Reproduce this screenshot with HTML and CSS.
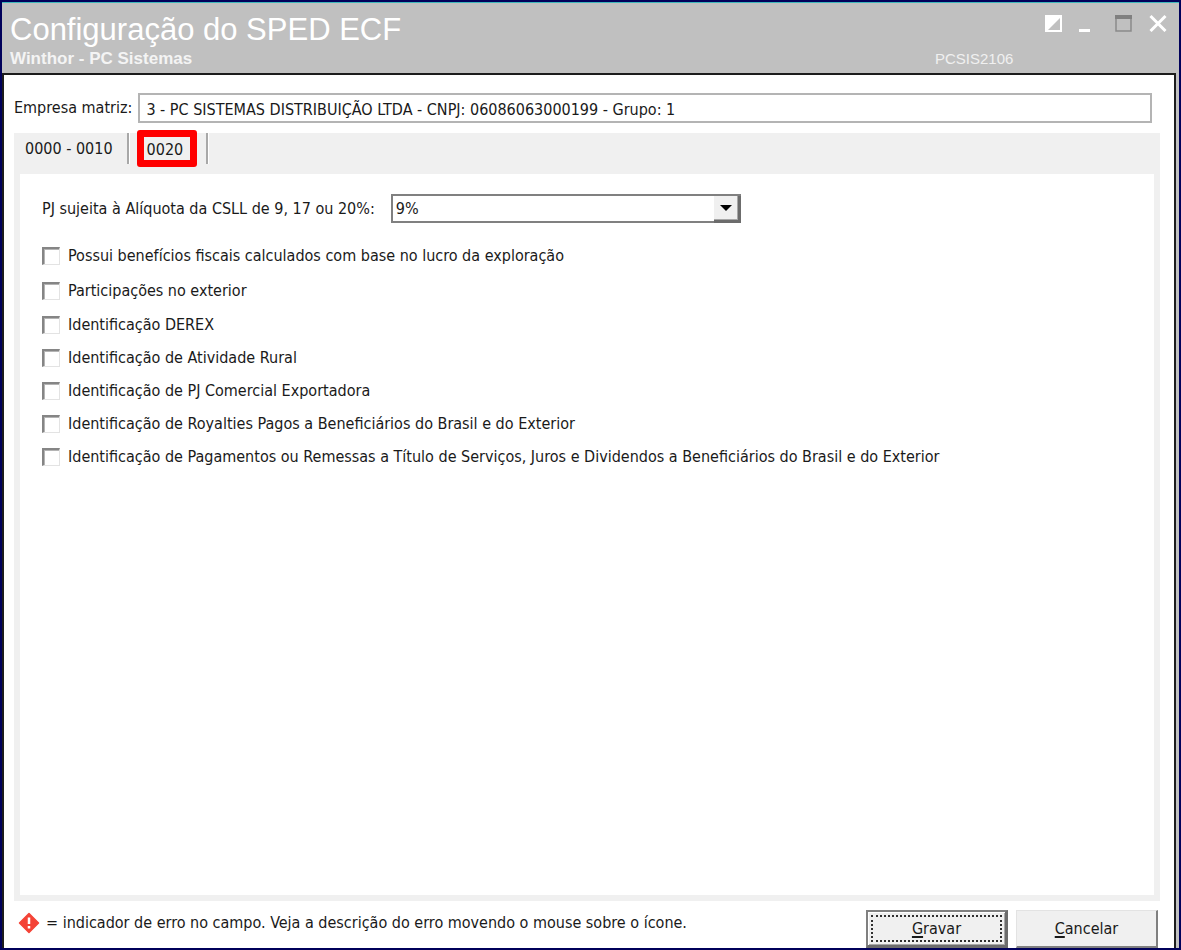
FILE: index.html
```html
<!DOCTYPE html>
<html lang="pt-BR">
<head>
<meta charset="utf-8">
<title>Configuração do SPED ECF</title>
<link rel="stylesheet" href="styles.css">
</head>
<body>
<div class="window">
  <header class="titlebar">
    <div class="heading">
      <h1 class="title">Configuração do SPED ECF</h1>
      <p class="subtitle">Winthor - PC Sistemas</p>
    </div>
    <div class="titlebar-side">
      <div class="controls">
        <button class="control" type="button" aria-label="Alternar modo">
          <svg width="18" height="18" viewBox="0 0 18 18"><rect x="1" y="1" width="17" height="17" fill="#fff"/><path d="M16 4v12H4z" fill="#c0c0c0"/></svg>
        </button>
        <button class="control" type="button" aria-label="Minimizar">
          <svg width="18" height="18" viewBox="0 0 18 18"><rect x="1" y="15" width="11" height="3" fill="#fff"/></svg>
        </button>
        <button class="control control-max" type="button" aria-label="Maximizar" disabled>
          <svg width="18" height="18" viewBox="0 0 18 18"><rect x="1" y="2" width="15" height="15" fill="none" stroke="#8a8a8a" stroke-width="1.500"/><rect x="0" y="1" width="17" height="4" fill="#808080"/></svg>
        </button>
        <button class="control" type="button" aria-label="Fechar">
          <svg width="18" height="18" viewBox="0 0 18 18"><path d="M1.500 2l15 15M16.500 2l-15 15" stroke="#fff" stroke-width="3"/></svg>
        </button>
      </div>
      <p class="routine">PCSIS2106</p>
    </div>
  </header>

  <main class="client">
    <div class="company">
      <label for="company">Empresa matriz:</label>
      <input id="company" class="text-box" type="text" value="3 - PC SISTEMAS DISTRIBUIÇÃO LTDA - CNPJ: 06086063000199 - Grupo: 1" readonly>
    </div>

    <section class="tabs">
      <div class="tab-list" role="tablist">
        <button class="tab" type="button" role="tab" aria-selected="false">0000 - 0010</button>
        <button class="tab tab-active" type="button" role="tab" aria-selected="true">0020</button>
      </div>
      <form class="panel" id="settings">
        <div class="rate">
          <label for="rate">PJ sujeita à Alíquota da CSLL de 9, 17 ou 20%:</label>
          <div class="select-box">
            <select id="rate" class="select"><option>9%</option><option>17%</option><option>20%</option></select>
            <span class="select-arrow"><svg width="12" height="6" viewBox="0 0 12 6"><path d="M0 0h12L6 6z"/></svg></span>
          </div>
        </div>
        <div class="checks">
          <label class="check"><input type="checkbox">Possui benefícios fiscais calculados com base no lucro da exploração</label>
          <label class="check"><input type="checkbox">Participações no exterior</label>
          <label class="check"><input type="checkbox">Identificação DEREX</label>
          <label class="check"><input type="checkbox">Identificação de Atividade Rural</label>
          <label class="check"><input type="checkbox">Identificação de PJ Comercial Exportadora</label>
          <label class="check"><input type="checkbox">Identificação de Royalties Pagos a Beneficiários do Brasil e do Exterior</label>
          <label class="check"><input type="checkbox">Identificação de Pagamentos ou Remessas a Título de Serviços, Juros e Dividendos a Beneficiários do Brasil e do Exterior</label>
        </div>
      </form>
    </section>

    <footer class="footer">
      <p class="hint">
        <svg width="22" height="22" viewBox="0 0 22 22"><path d="M11 1.500L20.500 11 11 20.500 1.500 11z" fill="#f44336" stroke="#f44336" stroke-width="1.500" stroke-linejoin="round"/><path d="M11 5.500v6.500M11 14v2.500" stroke="#fff" stroke-width="2.500"/></svg>
        = indicador de erro no campo. Veja a descrição do erro movendo o mouse sobre o ícone.
      </p>
      <div class="actions">
        <button class="button button-default" type="submit" form="settings"><span class="focus"><span><u>G</u>ravar</span></span></button>
        <button class="button" type="button"><span><u>C</u>ancelar</span></button>
      </div>
    </footer>
  </main>
</div>
</body>
</html>
```
FILE: styles.css
```css
* {
  box-sizing: border-box;
}

body {
  margin: 0;
  color: #1a1a1a;
  font: 16px/20px "DejaVu Sans Condensed", "DejaVu Sans", sans-serif;
}

h1,
p {
  margin: 0;
}

button,
input,
select {
  color: inherit;
  font: inherit;
}

.window {
  display: flex;
  flex-direction: column;
  min-height: 100vh;
  border: 2px solid #00005a;
  background: #c0c0c0;
}

.titlebar {
  display: flex;
  justify-content: space-between;
  height: 71px;
  padding: 10px 8px 0;
  border-top: 1px solid #3fb8bc;
  color: #fff;
  font-family: "Liberation Sans", Arial, sans-serif;
}

.title {
  font-size: 31px;
  font-weight: 400;
  line-height: 34px;
}

.subtitle {
  color: #f4f4f4;
  font-size: 17px;
  font-weight: 700;
  line-height: 24px;
}

.titlebar-side {
  width: 236px;
}

.controls {
  display: flex;
  justify-content: flex-end;
  gap: 16px;
  padding-right: 4px;
  height: 34px;
}

.control {
  width: 18px;
  height: 20px;
  padding: 0;
  border: 0;
  background: none;
}

.control svg {
  display: block;
}

.control-max {
  margin-left: 3px;
}

.routine {
  color: #f0f0f0;
  font-size: 15px;
  line-height: 24px;
}

.client {
  display: flex;
  flex: 1;
  flex-direction: column;
  margin-right: 3px;
  padding: 18px 14px 0 10px;
  border: 2px solid #1c1c1c;
  border-width: 2px 2px 0 2px;
  background: #fff;
}

.company {
  display: flex;
  align-items: center;
  gap: 6px;
  padding-right: 8px;
}

.text-box {
  flex: 1;
  min-width: 0;
  height: 30px;
  padding: 2px 6px 0;
  border: 2px solid #b4b4b4;
  background: #fff;
}

.tabs {
  display: flex;
  flex: 1;
  flex-direction: column;
  margin-top: 10px;
  padding: 0 6px 6px;
  background: #f0f0f0;
}

.tab-list {
  display: flex;
  height: 41px;
}

.tab {
  position: relative;
  height: 31px;
  padding: 0 14px 0 5px;
  border: 0;
  border-right: 2px solid #a8a8a8;
  box-shadow: 1px 0 #fff;
  background: none;
}

.tab-active {
  padding: 2px 23px 0 18px;
}

.tab-active::before {
  content: "";
  position: absolute;
  inset: -3px 9px -3px 8px;
  border: 7px solid #f00;
  border-radius: 3px;
}

.panel {
  flex: 1;
  padding: 20px 22px;
  background: #fff;
}

.rate {
  display: flex;
  align-items: center;
  gap: 16px;
}

.select-box {
  position: relative;
  width: 350px;
}

.select {
  display: block;
  appearance: none;
  width: 100%;
  height: 29px;
  padding: 0 30px 0 3px;
  border: 2px solid #808080;
  border-radius: 0;
  background: #fff;
}

.select-arrow {
  position: absolute;
  top: 2px;
  right: 0;
  bottom: 0;
  display: flex;
  align-items: center;
  justify-content: center;
  width: 27px;
  border: solid #6c6c6c;
  border-width: 0 3px 3px 0;
  box-shadow: inset -1px -1px #a8a8a8;
  background: #f0f0f0;
  pointer-events: none;
}

.checks {
  display: grid;
  grid-template-rows: 34px 35px;
  grid-auto-rows: 33px;
  justify-content: start;
  margin-top: 16px;
}

.check {
  display: flex;
  align-items: center;
  gap: 8px;
}

.check input {
  appearance: none;
  flex: none;
  width: 18px;
  height: 18px;
  margin: 0;
  border: solid;
  border-width: 2px 1px 1px 2px;
  border-color: #858585 #e3e3e3 #e3e3e3 #858585;
  box-shadow: inset 1px 1px #b4b4b4;
  background: #fff;
}

.footer {
  display: flex;
  justify-content: space-between;
  padding-top: 9px;
}

.hint {
  display: flex;
  align-items: center;
  gap: 6px;
  height: 26px;
  padding-left: 4px;
}

.actions {
  display: flex;
  gap: 8px;
  padding-right: 2px;
}

.button {
  display: flex;
  align-items: center;
  justify-content: center;
  width: 142px;
  height: 38px;
  padding: 0;
  border: solid;
  border-width: 1px 2px 2px 1px;
  border-color: #e3e3e3 #808080 #808080 #e3e3e3;
  background: #f0f0f0;
}

.button-default {
  border-width: 2px 3px 3px 2px;
  border-color: #808080 #6c6c6c #6c6c6c #808080;
  box-shadow: inset 1px 1px #fff, inset -1px -1px #a8a8a8;
}

.focus {
  display: flex;
  align-items: center;
  justify-content: center;
  width: 131px;
  height: 27px;
  border: 2px dotted #303030;
}

.button u {
  text-decoration-thickness: 2px;
  text-underline-offset: 2px;
}
```
